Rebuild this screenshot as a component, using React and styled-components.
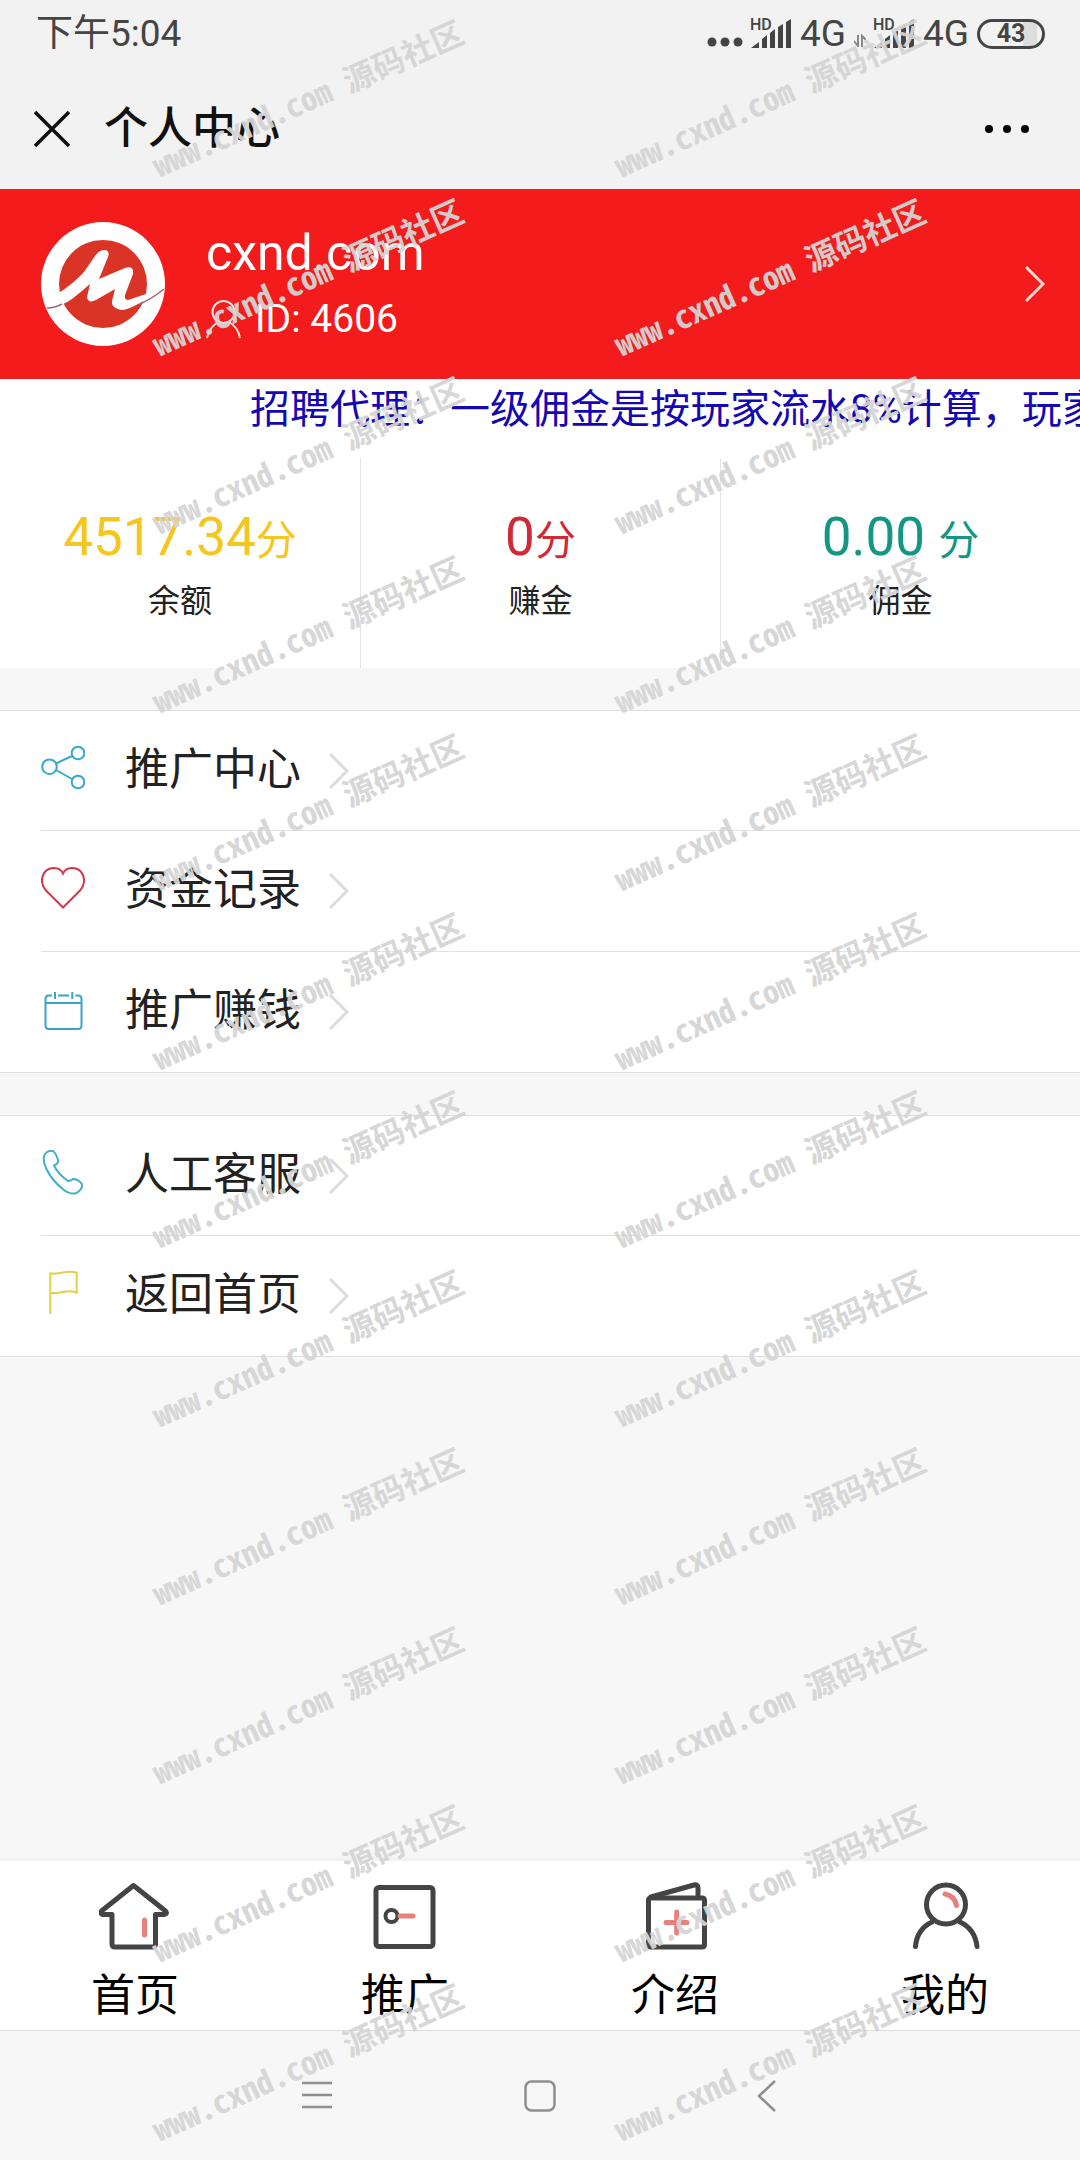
import React from 'react';
import styled, { createGlobalStyle } from 'styled-components';

const GlobalStyle = createGlobalStyle`
  * {
    box-sizing: border-box;
  }
  body {
    margin: 0;
    background: #f7f7f7;
    color: #222222;
    font-family: Roboto, "Noto Sans CJK SC", sans-serif;
  }
  a {
    color: inherit;
    text-decoration: none;
  }
  button {
    display: flex;
    padding: 0;
    border: 0;
    background: none;
    color: inherit;
    font: inherit;
    cursor: pointer;
  }
  svg {
    display: block;
    flex: none;
    fill: none;
  }
`

const Page = styled.div`
  position: relative;
  display: flex;
  flex-direction: column;
  min-height: 100vh;
  overflow: hidden;
`

const StatusBar = styled.div`
  display: flex;
  align-items: center;
  justify-content: space-between;
  height: 68px;
  padding: 0 35px 0 36px;
  background: #f2f2f2;
  color: #444444;
  font-size: 37px;
  line-height: 40px;
`

const StatusIcons = styled.div`
  display: flex;
  align-items: center;
  gap: 8px;
`

const Signal = styled.div`
  display: flex;
  align-items: center;
  gap: 8px;
`

const SignalBars = styled.div`
  position: relative;
`

const HdBadge = styled.span`
  position: absolute;
  top: -2px;
  left: -1px;
  font-size: 16px;
  font-weight: 500;
  line-height: 16px;
`

const Battery = styled.div`
  display: flex;
  align-items: center;
  justify-content: center;
  width: 68px;
  height: 30px;
  border: 3px solid #444444;
  border-radius: 15px;
  background: linear-gradient(to right, transparent 70%, #dddddd 70%, #dddddd 92%, transparent 92%);
  font-size: 25px;
  font-weight: 700;
  line-height: 24px;
`

const TitleBar = styled.header`
  display: flex;
  align-items: center;
  height: 121px;
  padding: 0 50px 0 34px;
  background: #f2f2f2;
  color: #111111;
`

const Title = styled.h1`
  flex: 1;
  margin: 0 0 0 34px;
  font-size: 44px;
  font-weight: 500;
  line-height: 52px;
`

const Profile = styled.a`
  display: flex;
  align-items: center;
  height: 190px;
  padding: 0 35px 0 41px;
  background: #f31b1b;
  color: #ffffff;
`

const ProfileText = styled.div`
  flex: 1;
  margin-left: 41px;
  padding-top: 4px;
  line-height: 66px;
`

const Name = styled.div`
  font-size: 50px;
`

const UserId = styled.div`
  display: flex;
  align-items: center;
  gap: 13px;
  font-size: 39px;
`

const Notice = styled.div`
  overflow: hidden;
  padding-left: 250px;
  background: #ffffff;
  color: #1408b4;
  font-size: 40px;
  line-height: 62px;
  white-space: nowrap;
`

const Stats = styled.section`
  display: grid;
  grid-template-columns: repeat(3, 1fr);
  padding-top: 17px;
  background: #ffffff;
`

const Stat = styled.div`
  padding: 49px 0 47px;
  text-align: center;

  & + & {
    border-left: 1px solid #e4e4e4;
  }
`

const StatValue = styled.div`
  color: ${props => props.$color};
  font-size: 53px;
  line-height: 60px;
`

const Unit = styled.span`
  font-size: 41px;
  line-height: 1;
`

const StatLabel = styled.div`
  margin-top: 14px;
  font-size: 32px;
  line-height: 40px;
`

const MenuGroup = styled.nav`
  margin-top: 42px;
  padding-left: 41px;
  border-top: 1px solid #dfdfdf;
  border-bottom: 1px solid #dfdfdf;
  background: #ffffff;
`

const MenuItem = styled.a`
  display: flex;
  align-items: center;
  min-height: 119px;

  & + & {
    min-height: 121px;
    border-top: 1px solid #e2e2e2;
  }
`

const MenuIcon = styled.span`
  margin-bottom: 7px;
  color: ${props => props.$color};
`

const MenuLabel = styled.span`
  margin: 0 28px 2px 40px;
  font-size: 44px;
  line-height: 52px;
`

const TabBar = styled.nav`
  display: grid;
  grid-template-columns: repeat(4, 1fr);
  margin-top: auto;
  border-bottom: 1px solid #dddddd;
  background: #ffffff;
  box-shadow: 0 -2px 4px #eeeeee;
`

const Tab = styled.a`
  display: flex;
  flex-direction: column;
  align-items: center;
  gap: 20px;
  padding: 21px 0 8px;
  color: #000000;
  font-size: 44px;
  line-height: 52px;
`

const SystemNav = styled.div`
  display: flex;
  align-items: center;
  justify-content: center;
  gap: 192px;
  height: 129px;
`

// Stamped over the whole page, two per line
const Watermarks = styled.div`
  position: absolute;
  inset: 8px 4px 10px 0;
  display: grid;
  grid-template-columns: repeat(2, 43%);
  grid-auto-rows: 1fr;
  place-items: center;
  justify-content: center;
  pointer-events: none;
`

const Watermark = styled.span`
  color: rgba(213, 213, 213, 0.94);
  font-family: "Noto Sans Mono CJK SC", "Noto Sans CJK SC", monospace;
  font-size: 32px;
  font-weight: 700;
  line-height: 32px;
  white-space: nowrap;
  transform: rotate(-24deg);
`

const Chevron = ({ color }) => (
  <svg width="20" height="38" stroke={color} strokeWidth="3">
    <path d="M1 2 L18 19 L1 36" />
  </svg>
)

const Bars = () => (
  <svg width="41" height="30">
    <path d="M0 29 L8 23 V29Z M11 20 L16 16 V29 H11Z M19 14 L24 10 V29 H19Z M27 8 L32 5 V29 H27Z M35 3 L40 0 V29 H35Z" fill="#444444" />
  </svg>
)

const Logo = () => (
  <svg width="124" height="124" viewBox="0 0 124 124">
    <circle cx="62" cy="62" r="62" fill="#ffffff" />
    <circle cx="62" cy="62" r="44" fill="#d93426" />
    <path
      fill="#ffffff"
      d="M16 72 Q31 63 43 50 L54 34 Q59 27 64 28 Q69 29 67 35 L58 57 L84 46 Q93 43 92 52 L84 73 Q83 80 90 77 L108 71 L122 67 Q108 77 97 82 Q86 88 80 88 Q70 86 71 79 L74 67 L55 78 Q47 82 46 75 L49 62 Q40 70 31 77 Q22 84 6 86Z"
    />
    <path d="M6 86 Q14 86 21 82 M99 82 Q112 76 123 67" stroke="#a9646b" strokeWidth="1.5" />
  </svg>
)

const UserIcon = () => (
  <svg width="36" height="39" viewBox="0 0 36 39" stroke="#ffe3dd" strokeWidth="2">
    <circle cx="17.5" cy="12" r="11" />
    <path d="M1 38 Q3 28 12 22 M23 22 Q32 27 34 38" />
  </svg>
)

const menuIcons = {
  share: (
    <>
      <circle cx="37" cy="8" r="6.3" />
      <circle cx="8.5" cy="21.7" r="7.3" />
      <circle cx="37" cy="37" r="6.3" />
      <path d="M15 18.5 L31 11 M15 25 L31 34" />
    </>
  ),
  heart: <path d="M22 42.5 L5 25.5 C-3 16 2 3 13 3 C17 3 20.5 5 22 8.5 C23.5 5 27 3 31 3 C42 3 47 16 39 25.5Z" />,
  calendar: (
    <>
      <path d="M11 9.5 H8 Q4.5 9.5 4.5 13 V39.5 Q4.5 43 8 43 H37 Q40.5 43 40.5 39.5 V13 Q40.5 9.5 37 9.5 H34.5 M17 9.5 H28" />
      <path d="M4.5 17 H40.5 M14 6 V13 M31.3 6 V13" />
    </>
  ),
  phone: <path d="M4 4 Q7 0 12 1 Q15 3 17.3 11 Q17 14 13 15.5 Q17 24 27 31 Q30 31 32 29 Q37 29 41 34 Q42 39 35.5 43 Q30 45 23 40 Q11 31 5 18 Q1 9 4 4Z" />,
  flag: <path d="M9.3 44 V3.5 Q16 4 22 2.5 Q29 1 35.7 2.5 V22.5 Q29 20.5 22 22 Q16 23.5 9.3 23" />,
}

const tabIcons = {
  home: (
    <>
      <path d="M34.5 3.5 L2.5 29 Q1 32 4 32.5 H13 V62 Q13 65 16 65 H53.5 Q56.5 65 56.5 62 V32.5 H65 Q69 32 66.5 29Z" />
      <path d="M45.5 38 V53" stroke="#e8807c" />
    </>
  ),
  promote: (
    <>
      <rect x="7" y="5.5" width="57" height="59" rx="3" />
      <circle cx="22.5" cy="34" r="6" strokeWidth="4" />
      <path d="M31 34 H44" stroke="#e8807c" />
    </>
  ),
  intro: (
    <>
      <rect x="9.5" y="16" width="56" height="49" rx="2" />
      <path d="M12 15 L55 3 Q59 2 59 6 V15" />
      <path d="M37.7 30 V51 M27 40.5 H48" stroke="#e8807c" />
    </>
  ),
  mine: (
    <>
      <circle cx="37" cy="22.5" r="19.5" />
      <path d="M6.5 64.5 Q8 47 23 40 M51 40 Q66 47 68 64.5" />
      <path d="M36 12 Q46 14 47.5 23.5" stroke="#e8807c" />
    </>
  ),
}

const stats = [
  { value: '4517.34', label: '余额', color: '#f4c61e' },
  { value: '0', label: '赚金', color: '#cf2a38' },
  { value: '0.00 ', label: '佣金', color: '#139783' },
]

const menuGroups = [
  [
    { icon: 'share', label: '推广中心', color: '#36a9cd' },
    { icon: 'heart', label: '资金记录', color: '#d0374a' },
    { icon: 'calendar', label: '推广赚钱', color: '#3aa3c8' },
  ],
  [
    { icon: 'phone', label: '人工客服', color: '#3fb0c6' },
    { icon: 'flag', label: '返回首页', color: '#e3d04a' },
  ],
]

const tabs = [
  { icon: 'home', label: '首页' },
  { icon: 'promote', label: '推广' },
  { icon: 'intro', label: '介绍' },
  { icon: 'mine', label: '我的' },
]

const App = () => {

  return (
    <Page lang="zh-CN">
      <GlobalStyle />

      <StatusBar>
        <span>下午5:04</span>
        <StatusIcons>
          <svg width="36" height="26">
            <circle cx="5" cy="21" r="4.5" fill="#444444" />
            <circle cx="18" cy="21" r="4.5" fill="#444444" />
            <circle cx="31" cy="21" r="4.5" fill="#444444" />
          </svg>
          <Signal>
            <SignalBars><HdBadge>HD</HdBadge><Bars /></SignalBars>
            <span>4G</span>
          </Signal>
          <svg width="12" height="26" stroke="#888888" strokeWidth="2">
            <path d="M4 14 V25 L0 20 M8 26 V15 L12 19" />
          </svg>
          <Signal>
            <SignalBars><HdBadge>HD</HdBadge><Bars /></SignalBars>
            <span>4G</span>
          </Signal>
          <Battery>43</Battery>
        </StatusIcons>
      </StatusBar>

      <TitleBar>
        <button type="button" aria-label="关闭">
          <svg width="36" height="36" stroke="#111111" strokeWidth="3.5">
            <path d="M1 1 L35 35 M35 1 L1 35" />
          </svg>
        </button>
        <Title>个人中心</Title>
        <button type="button" aria-label="更多">
          <svg width="46" height="10">
            <circle cx="5" cy="5" r="4" fill="#000000" />
            <circle cx="23" cy="5" r="4" fill="#000000" />
            <circle cx="41" cy="5" r="4" fill="#000000" />
          </svg>
        </button>
      </TitleBar>

      <Profile href="#profile">
        <Logo />
        <ProfileText>
          <Name>cxnd.com</Name>
          <UserId><UserIcon />ID: 4606</UserId>
        </ProfileText>
        <Chevron color="#ffd9d4" />
      </Profile>

      <Notice>招聘代理：一级佣金是按玩家流水8%计算，玩家</Notice>

      <Stats>
        {stats.map(stat => (
          <Stat key={stat.label}>
            <StatValue $color={stat.color}>{stat.value}<Unit>分</Unit></StatValue>
            <StatLabel>{stat.label}</StatLabel>
          </Stat>
        ))}
      </Stats>

      {menuGroups.map((items, index) => (
        <MenuGroup key={index}>
          {items.map(item => (
            <MenuItem key={item.icon} href={`#${item.icon}`}>
              <MenuIcon $color={item.color}>
                <svg width="44" height="45" viewBox="0 0 44 45" stroke="currentColor" strokeWidth="2">
                  {menuIcons[item.icon]}
                </svg>
              </MenuIcon>
              <MenuLabel>{item.label}</MenuLabel>
              <Chevron color="#dcdcdc" />
            </MenuItem>
          ))}
        </MenuGroup>
      ))}

      <TabBar>
        {tabs.map(tab => (
          <Tab key={tab.icon} href={`#${tab.icon}`}>
            <svg width="72" height="68" viewBox="0 0 72 68" stroke="#444444" strokeWidth="5" strokeLinecap="round" strokeLinejoin="round">
              {tabIcons[tab.icon]}
            </svg>
            {tab.label}
          </Tab>
        ))}
      </TabBar>

      <SystemNav>
        <button type="button" aria-label="菜单">
          <svg width="32" height="32" stroke="#8f8f8f" strokeWidth="2.5">
            <path d="M2 3 H32 M2 15 H32 M2 27 H32" />
          </svg>
        </button>
        <button type="button" aria-label="主屏幕">
          <svg width="32" height="32" stroke="#8f8f8f" strokeWidth="2.5">
            <rect x="1.5" y="1.5" width="29" height="29" rx="6" />
          </svg>
        </button>
        <button type="button" aria-label="返回">
          <svg width="32" height="32" stroke="#8f8f8f" strokeWidth="2.5">
            <path d="M27 1 L11 16 L27 31" />
          </svg>
        </button>
      </SystemNav>

      <Watermarks aria-hidden="true">
        {Array.from({ length: 24 }, (_, index) => (
          <Watermark key={index}>www.cxnd.com 源码社区</Watermark>
        ))}
      </Watermarks>
    </Page>
  )
}

export default App;
